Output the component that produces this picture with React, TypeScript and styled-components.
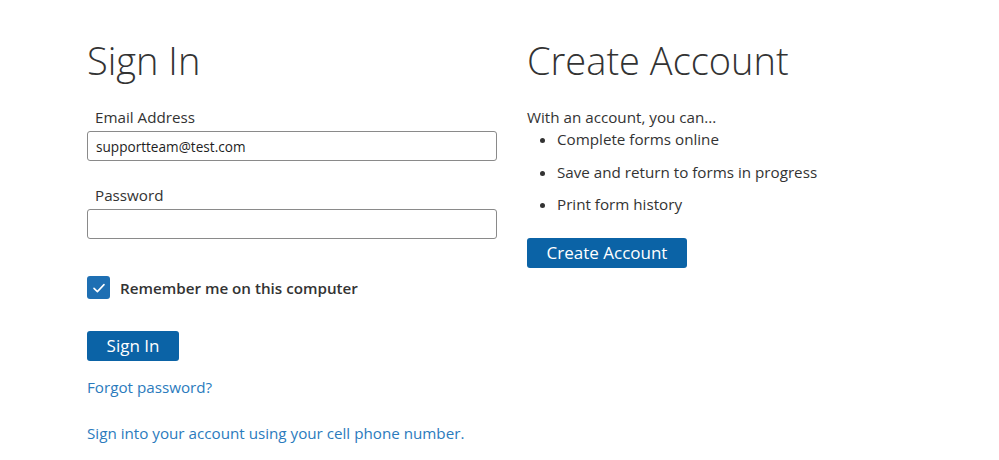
import { FC } from 'react';
import styled, { createGlobalStyle } from 'styled-components';

const GlobalStyle = createGlobalStyle`
    body {
        margin: 0;
        background: #ffffff;
        font-family: 'Open Sans', 'Liberation Sans', sans-serif;
        color: #333333;
    }
`;

const features = [
    'Complete forms online',
    'Save and return to forms in progress',
    'Print form history',
];

export const App: FC = () => {
    return (
        <>
            <GlobalStyle />
            <Page>
                <Column $width={410}>
                    <Heading>Sign In</Heading>
                    <Field>
                        <Label htmlFor={'email'}>Email Address</Label>
                        <Input id={'email'} type={'text'} defaultValue={'supportteam@test.com'} />
                    </Field>
                    <Field>
                        <Label htmlFor={'password'}>Password</Label>
                        <Input id={'password'} type={'password'} />
                    </Field>
                    <CheckRow>
                        <CheckBox>
                            <svg width="14" height="14" viewBox="0 0 14 14" fill="none">
                                <path d="M2 7.4 L5.4 10.6 L12 3.6" stroke="#fff" strokeWidth="1.6" strokeLinecap="round" strokeLinejoin="round" />
                            </svg>
                        </CheckBox>
                        <CheckLabel>Remember me on this computer</CheckLabel>
                    </CheckRow>
                    <Button $width={92}>Sign In</Button>
                    <LinkText href={'#'}>Forgot password?</LinkText>
                    <LinkText href={'#'} $top={24}>
                        Sign into your account using your cell phone number.
                    </LinkText>
                </Column>
                <Column>
                    <Heading>Create Account</Heading>
                    <Intro>With an account, you can...</Intro>
                    <Features>
                        {features.map((f) => (
                            <li key={f}>{f}</li>
                        ))}
                    </Features>
                    <Button $width={160}>Create Account</Button>
                </Column>
            </Page>
        </>
    );
};

const Page = styled.div`
    display: flex;
    gap: 30px;
    padding: 36px 0 0 87px;
`;

const Column = styled.div<{ $width?: number }>`
    display: flex;
    flex-direction: column;
    align-items: flex-start;
    width: ${(p) => (p.$width ? `${p.$width}px` : 'auto')};
`;

const Heading = styled.h1`
    margin: 0 0 22px;
    font-size: 38px;
    font-weight: 300;
    line-height: 48px;
    color: #333333;
`;

const Field = styled.div`
    display: flex;
    flex-direction: column;
    width: 100%;
    margin-bottom: 23px;
`;

const Label = styled.label`
    font-size: 15.2px;
    line-height: 22px;
    padding-left: 8px;
    margin-bottom: 3px;
    color: #333333;
`;

const Input = styled.input`
    box-sizing: border-box;
    width: 100%;
    height: 30px;
    padding: 0 8px;
    border: 1px solid #8a8a8a;
    border-radius: 3px;
    font-family: 'Open Sans', 'Liberation Sans', sans-serif;
    font-size: 13.6px;
    font-weight: 500;
    color: #1e1e1e;
    outline: none;
`;

const CheckRow = styled.div`
    display: flex;
    align-items: center;
    gap: 10px;
    margin: 14px 0 32px;
`;

const CheckBox = styled.span`
    display: flex;
    align-items: center;
    justify-content: center;
    width: 23px;
    height: 23px;
    border-radius: 3px;
    background: #1e6fb3;
`;

const CheckLabel = styled.span`
    font-size: 15.2px;
    font-weight: 600;
    color: #333333;
`;

const Button = styled.button<{ $width: number }>`
    width: ${(p) => p.$width}px;
    height: 30px;
    padding: 0;
    border: none;
    border-radius: 3px;
    background: #0b63a6;
    color: #ffffff;
    font-family: 'Open Sans', 'Liberation Sans', sans-serif;
    font-size: 17px;
    line-height: 30px;
    cursor: pointer;
`;

const LinkText = styled.a<{ $top?: number }>`
    margin-top: ${(p) => p.$top ?? 15}px;
    font-size: 15.2px;
    line-height: 22px;
    color: #2b7bbd;
    text-decoration: none;
`;

const Intro = styled.p`
    margin: 0;
    font-size: 15.2px;
    line-height: 22px;
`;

const Features = styled.ul`
    margin: 0 0 12px;
    padding-left: 30px;
    font-size: 15.2px;
    line-height: 22px;

    li {
        margin-bottom: 10.5px;
    }
`;

export default App;
